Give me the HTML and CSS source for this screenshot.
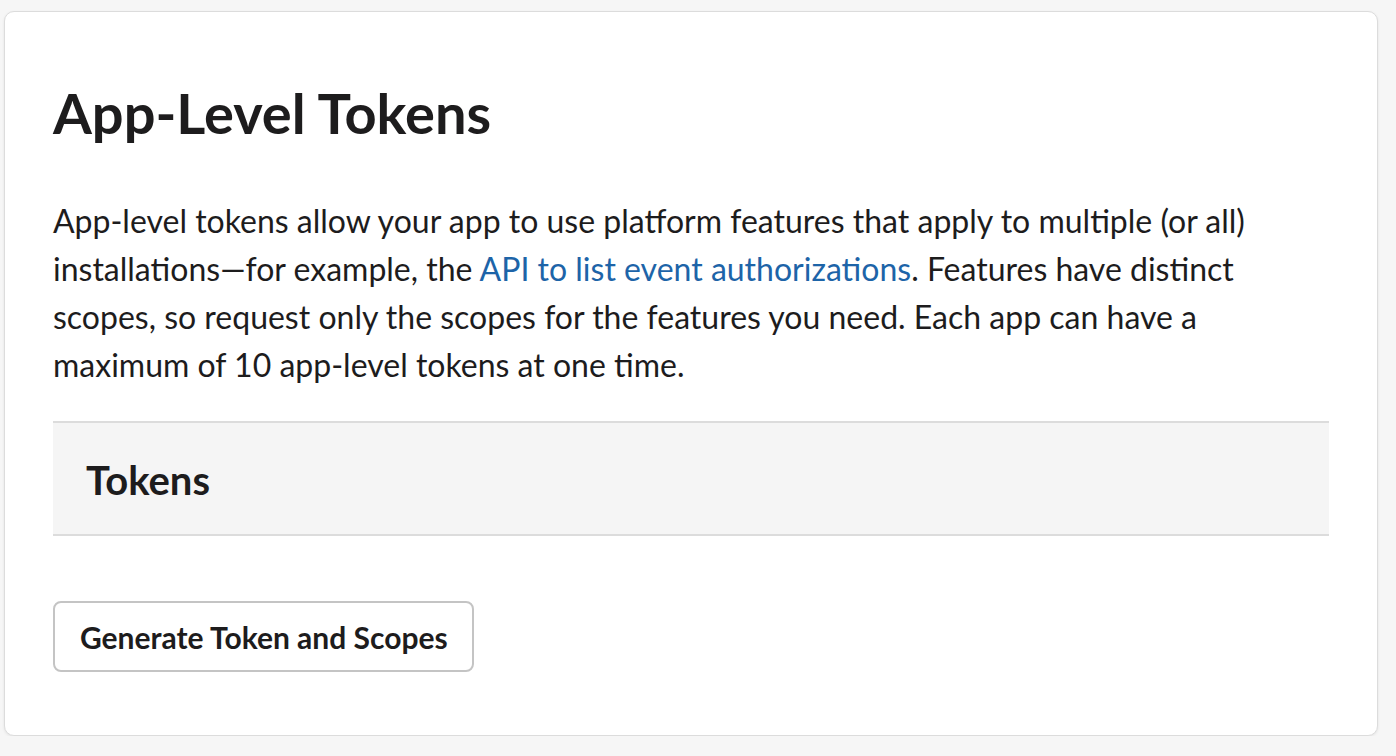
FILE: index.html
```html
<!DOCTYPE html>
<html lang="en">
<head>
<meta charset="utf-8">
<title>App-Level Tokens</title>
<link rel="stylesheet" href="styles.css">
</head>
<body>
<div class="card">
  <h1 class="title">App-Level Tokens</h1>
  <p class="desc">App-level tokens allow your app to use platform features that apply to multiple (or all) installations—for example, the <a class="link" href="#">API to list event authorizations</a>. Features have distinct scopes, so request only the scopes for the features you need. Each app can have a maximum of 10 app-level tokens at one time.</p>
  <div class="band">
    <h2 class="band-title">Tokens</h2>
  </div>
  <div class="actions">
    <button class="btn" type="button">Generate Token and Scopes</button>
  </div>
</div>
</body>
</html>
```
FILE: styles.css
```css
html, body {
  margin: 0;
  padding: 0;
  background: #f6f6f6;
}
body {
  font-family: Lato, "Noto Sans", sans-serif;
  color: #1d1c1d;
  padding: 11px 18px 0 4px;
}
.card {
  background: #fff;
  border: 1px solid #dcdcdc;
  border-radius: 10px;
  box-shadow: 0 1px 3px rgba(0,0,0,0.08);
  padding: 0 48px;
  height: 725px;
  box-sizing: border-box;
}
.title {
  font-size: 56px;
  font-weight: 700;
  line-height: 68px;
  margin: 0;
  padding-top: 67px;
}
.desc {
  font-size: 32px;
  line-height: 48px;
  margin: 0;
  padding-top: 50px;
  font-weight: 400;
}
.link {
  color: #1d64a8;
  text-decoration: none;
}
.band {
  margin-top: 32px;
  background: #f5f5f5;
  border-top: 2px solid #dcdcdc;
  border-bottom: 2px solid #dcdcdc;
  height: 115px;
  box-sizing: border-box;
  display: flex;
  align-items: center;
  padding: 0 33px;
}
.band-title {
  font-size: 40px;
  font-weight: 700;
  margin: 0;
  line-height: 1;
  padding-top: 2px;
}
.actions {
  padding-top: 65px;
}
.btn {
  font-family: Lato, "Noto Sans", sans-serif;
  font-size: 30px;
  font-weight: 700;
  color: #1d1c1d;
  background: #fff;
  border: 2px solid #c4c4c4;
  border-radius: 8px;
  height: 71px;
  padding: 0 24px 0 25px;
  cursor: pointer;
}
```
